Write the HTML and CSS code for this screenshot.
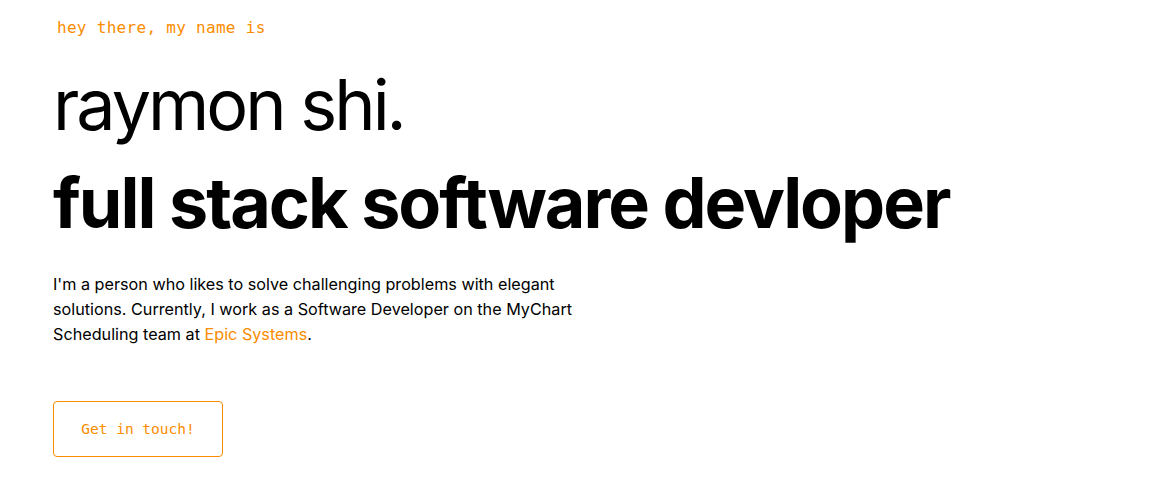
FILE: index.html
```html
<!DOCTYPE html>
<html lang="en">
<head>
<meta charset="utf-8">
<title>raymon shi</title>
<link rel="stylesheet" href="styles.css">
</head>
<body>
<section class="hero">
  <h1 class="intro">hey there, my name is</h1>
  <h2 class="name">raymon shi.</h2>
  <h3 class="role">full stack software devloper</h3>
  <p class="about">I'm a person who likes to solve challenging problems with elegant solutions. Currently, I work as a Software Developer on the MyChart Scheduling team at <a class="link" href="#">Epic Systems</a>.</p>
  <a class="btn" href="#">Get in touch!</a>
</section>
</body>
</html>
```
FILE: styles.css
```css
html, body {
  margin: 0;
  padding: 0;
  background: #ffffff;
}
body {
  font-family: "Inter", "Liberation Sans", sans-serif;
  color: #000;
}
.hero {
  display: flex;
  flex-direction: column;
  align-items: flex-start;
  padding: 14px 0 0 53px;
}
.intro {
  margin: 0 0 0 4px;
  font-family: "DejaVu Sans Mono", monospace;
  font-weight: 400;
  font-size: 16px;
  letter-spacing: 0.3px;
  line-height: 28px;
  color: #fb8c00;
}
.name {
  margin: 18px 0 0 0;
  font-size: 70px;
  font-weight: 400;
  line-height: 90px;
  letter-spacing: -3px;
}
.role {
  margin: 8px 0 0 0;
  font-size: 70px;
  font-weight: 700;
  line-height: 90px;
  letter-spacing: -2px;
}
.about {
  margin: 24px 0 0 0;
  max-width: 540px;
  font-size: 16.2px;
  line-height: 25px;
}
.link {
  color: #fb8c00;
  text-decoration: none;
}
.btn {
  margin-top: 54px;
  display: flex;
  align-items: center;
  justify-content: center;
  width: 168px;
  height: 54px;
  border: 1px solid #fb8c00;
  border-radius: 4px;
  font-family: "DejaVu Sans Mono", monospace;
  font-size: 14.5px;
  color: #fb8c00;
  text-decoration: none;
}
```
